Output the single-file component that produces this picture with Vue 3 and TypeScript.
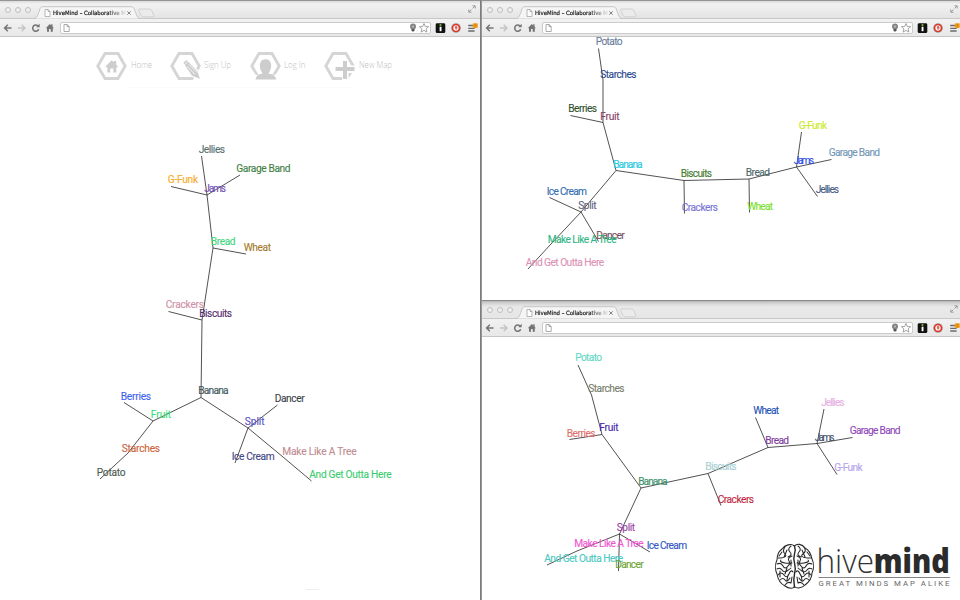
<script setup lang="ts">
type Point = [number, number]
interface Label { text: string; x: number; y: number; w: number; color: string }
interface MapWindow { id: string; viewBox: string; labels: Label[]; edges: Point[][]; nav?: boolean; logo?: boolean }

const L = (text: string, x: number, y: number, w: number, color: string): Label => ({ text, x: x - 0.3, y: y - 0.4, w: w + 0.4, color })
const points = (edge: Point[]) => edge.map(p => p.join(',')).join(' ')

const navItems = ['Home', 'Sign Up', 'Log In', 'New Map']
const navWidths = [21, 27, 21.5, 33]

const main: MapWindow = {
  id: 'main', viewBox: '0 37 480 563', nav: true,
  edges: [
    [[201.5, 156], [207, 195], [213, 248], [202, 320], [201, 397.5], [153, 421], [128, 453], [100, 479]],
    [[171, 186.5], [207, 195], [240, 175]],
    [[213, 248], [246, 254]], [[168.5, 311.5], [202, 320]], [[124, 402.5], [153, 421]],
    [[201, 397.5], [248, 428], [283, 457], [311.5, 481]], [[277.5, 405], [248, 428], [235, 463]],
  ],
  labels: [
    L('Jellies', 199, 153, 26, '#53706c'), L('Garage Band', 236.5, 172.5, 54, '#3f8145'), L('G-Funk', 168, 183.5, 30, '#f5ac27'),
    L('Jams', 204.5, 192, 21.5, '#704fb5'), L('Bread', 211, 245, 24.5, '#3fd77e'), L('Wheat', 244, 251, 27, '#a37b2c'),
    L('Crackers', 166, 308, 38, '#cf91a5'), L('Biscuits', 199.5, 317.3, 32.5, '#552b6d'), L('Banana', 198.5, 394.8, 30, '#40575a'),
    L('Berries', 121, 400, 30, '#3d62f0'), L('Fruit', 151, 418, 20, '#38e077'), L('Dancer', 275, 402, 29.5, '#3d434b'),
    L('Split', 245, 425.5, 19.5, '#5750c4'), L('Starches', 122, 452.5, 38, '#cc6339'), L('Potato', 97, 476.5, 28.5, '#4c5b50'),
    L('Ice Cream', 232, 460, 42.5, '#424785'), L('Make Like A Tree', 282.5, 455.2, 74, '#c18c91'), L('And Get Outta Here', 309.5, 478, 82, '#3bcd71'),
  ],
}

const sideWindows: MapWindow[] = [
  {
    id: 'top', viewBox: '482 37 478 263',
    edges: [
      [[598.5, 48.5], [603, 80], [603, 122.5], [616, 170.5], [684, 180.5], [749, 179], [796.5, 167], [801.5, 132]],
      [[570.5, 115.5], [603, 122.5]], [[831.5, 159.5], [796.5, 167], [817.5, 196.5]],
      [[684, 180.5], [684.5, 213.5]], [[749, 179], [749.5, 212.5]],
      [[616, 170.5], [581, 212], [551, 244], [528, 269]], [[549.5, 197.5], [581, 212], [598.5, 241.5]],
    ],
    labels: [
      L('Potato', 596, 45.8, 26.5, '#69809c'), L('Starches', 600.5, 78, 36, '#2c498d'), L('Berries', 568.5, 112.7, 28.5, '#31502f'),
      L('Fruit', 600.5, 120, 19, '#863d67'), L('Banana', 613.5, 168, 29, '#24c9df'), L('Biscuits', 681, 177.7, 31, '#437a2d'),
      L('Bread', 746, 176.7, 24, '#4c6869'), L('Jams', 794, 164.7, 20, '#2e4ce7'), L('G-Funk', 799, 129.2, 28, '#cbea29'),
      L('Garage Band', 829, 156.5, 51, '#7297b7'), L('Jellies', 816, 193.5, 23, '#435b84'), L('Crackers', 682, 211.5, 36, '#7774d5'),
      L('Wheat', 747.5, 210.2, 25.5, '#77df29'), L('Ice Cream', 547, 195.3, 39.8, '#326eb0'), L('Split', 578.5, 209.8, 18, '#62617d'),
      L('Dancer', 596.5, 239.3, 28, '#744d5a'), L('Make Like A Tree', 548, 243, 68.5, '#2fb583'), L('And Get Outta Here', 526, 266.8, 78, '#dc91b5'),
    ],
  },
  {
    id: 'bottom', viewBox: '482 337 478 263', logo: true,
    edges: [
      [[578, 365], [591.5, 395], [602, 434.5], [641, 488], [708, 473.5], [768, 447.5], [817, 443.5], [824, 409]],
      [[569.5, 439.5], [602, 434.5]], [[708, 473.5], [721, 505.5]], [[755.5, 417.5], [768, 447.5]],
      [[852.5, 437.5], [817, 443.5], [837, 474.5]],
      [[641, 488], [619.5, 534], [577, 551], [547, 565]], [[650, 552], [619.5, 534], [618.5, 571]],
    ],
    labels: [
      L('Potato', 575.5, 361.8, 26.5, '#63d8c4'), L('Starches', 588.5, 392, 36, '#777d69'), L('Fruit', 599.5, 431.3, 19, '#4425ad'),
      L('Berries', 567, 437, 28.5, '#e2706a'), L('Banana', 638.5, 485.7, 29, '#3b9169'), L('Biscuits', 705.5, 470.5, 31, '#a6cfd2'),
      L('Crackers', 718, 503, 36, '#c12740'), L('Bread', 765.5, 444.7, 23.5, '#7d3d9d'), L('Wheat', 753.5, 414.5, 25.5, '#2452b8'),
      L('Jams', 815, 441.5, 19.5, '#45526c'), L('Jellies', 821.5, 406, 23, '#e7afe3'), L('Garage Band', 850, 434.5, 50.5, '#8f48ba'),
      L('G-Funk', 834.5, 471.5, 28, '#b5a4ed'), L('Split', 617, 531.3, 18, '#9942a4'), L('Make Like A Tree', 574.5, 547.7, 69, '#f154cf'),
      L('Ice Cream', 647, 549.2, 40, '#3158c4'), L('And Get Outta Here', 544.5, 562.7, 78.5, '#4bc9c2'), L('Dancer', 615.5, 568.7, 28, '#6da432'),
    ],
  },
]
const columns = [{ id: 'left', windows: [main] }, { id: 'right', windows: sideWindows }]
</script>

<template>
  <main class="desktop">
    <div v-for="col in columns" :key="col.id" class="column" :class="col.id">
      <section v-for="win in col.windows" :key="win.id" class="window">
        <header class="chrome">
          <div class="tabstrip">
            <div class="lights"><i></i><i></i><i></i></div>
            <div class="tab">
              <svg class="tabshape" viewBox="0 0 122 13">
                <path d="M1 12.500C4 12 5 9 6.300 5C7.200 2 7.500 .7 10 .7H98C100.500 .7 101 2 102 5C103.500 9 104 12 107 12.500" fill="#f5f5f5" stroke="#bcbcbc" stroke-width=".8" />
                <path d="M106.500 3H116.500Q118 3 118.700 4.500L120.800 9.300Q121.200 10.800 119.500 10.800H110.500Q108.800 10.800 108.200 9.500L105.800 4.600Q105.300 3 106.500 3Z" fill="#ebebeb" stroke="#c6c6c6" stroke-width=".7" />
              </svg>
              <div class="tabcontent">
                <svg class="page" viewBox="0 0 7 8"><path d="M1 .5H4L6 2.500V7.500H1ZM4 .5V2.500H6" fill="#fff" stroke="#999" stroke-width=".7" /></svg>
                <svg class="title" viewBox="0 0 73 10"><text x="0" y="7.200" textLength="73" lengthAdjust="spacingAndGlyphs">HiveMind – Collaborative M</text></svg>
                <svg class="close" viewBox="0 0 6 6"><path d="M1.300 1.300L4.700 4.700M4.700 1.300L1.300 4.700" stroke="#777" stroke-width=".9" /></svg>
              </div>
            </div>
            <svg class="expand" viewBox="0 0 8 8"><path d="M4.500 .8H7.200V3.500M7 1L4.600 3.400M3.500 7.200H.8V4.500M1 7L3.400 4.600" fill="none" stroke="#9b9b9b" stroke-width="1" /></svg>
          </div>
          <div class="toolbar">
            <svg class="navigation" viewBox="0 0 60 17">
              <g fill="none" stroke-width="1.500">
                <path d="M11.500 9H4.800M7.800 5.800L4.600 9L7.800 12.200" stroke="#747474" />
                <path d="M18 9H24.700M21.700 5.800L24.900 9L21.700 12.200" stroke="#c4c4c4" />
                <path d="M38.300 7.300A3.100 3.100 0 1 0 38.700 10.200" stroke="#747474" />
              </g>
              <path d="M39.700 4.800V8.300H36.200Z" fill="#747474" />
              <path d="M45.800 9.200L49.800 5L51.200 6.400V5.200H52.600V7.700L53.900 9.200H52.800V12.800H50.700V10H49V12.800H47V9.200Z" fill="#747474" />
            </svg>
            <div class="address">
              <svg class="file" viewBox="0 0 7 8"><path d="M1 .5H4L6.200 2.500V7.500H1ZM4 .5V2.500H6.200" fill="#fff" stroke="#888" stroke-width=".7" /></svg>
              <svg class="marks" viewBox="0 0 22 12">
                <circle cx="5" cy="4.500" r="3" fill="#858585" /><circle cx="5" cy="4.500" r="1.100" fill="#bbb" /><path d="M3.500 7H6.500V8.600L5.700 9.600H4.300L3.500 8.600Z" fill="#555" />
                <path d="M16 1.500L17.300 4.500L20.600 4.700L18.100 6.900L18.900 10.100L16 8.400L13.100 10.100L13.900 6.900L11.400 4.700L14.700 4.500Z" fill="#fff" stroke="#888" stroke-width=".75" />
              </svg>
            </div>
            <svg class="extensions" viewBox="0 0 49 17">
              <rect x="4.700" y="4.300" width="9.600" height="9.800" rx="1.400" fill="#111" /><rect x="8.600" y="7.700" width="1.900" height="4.500" fill="#fff" /><circle cx="9.500" cy="6" r="1.100" fill="#7fbc25" />
              <circle cx="25" cy="9" r="4.800" fill="#aaa" /><circle cx="25" cy="9" r="3.500" fill="#fff" stroke="#dc392d" stroke-width="1.700" /><path d="M23.700 8L24.300 7L25.800 6.800L26.500 8.400L26 10.600H24.500Z" fill="#e46a60" />
              <path d="M37.200 6.500H44M37.200 9.300H43.600M37.200 12H43.600" stroke="#6b6b6b" stroke-width="1.300" /><rect x="41.800" y="4.200" width="5" height="4.700" rx=".8" fill="#f49b16" /><path d="M44.300 5V7.300M44.300 7.700V8.300" stroke="#c66d0b" stroke-width=".8" />
            </svg>
          </div>
        </header>
        <div class="content">
          <nav v-if="win.nav" class="sitenav">
            <a v-for="(item, i) in navItems" :key="item">
              <svg class="hex" viewBox="0 0 32 30">
                <path d="M9 2.500H22L29.200 15L22 27.500H9L1.800 15Z" fill="none" stroke="#d5d5d5" stroke-width="2.900" />
                <path v-if="i === 0" d="M9.500 15.600L15.700 9.200L17.800 11.300V10H20.200V13.700L22 15.600L20.800 16.500L20.300 16V21.500H17.400V17.500H14.200V21.500H11.400V16L10.700 16.700Z" fill="#cdcdcd" />
                <g v-else-if="i === 1"><path d="M12.500 11.800L16.600 8L28 20L31 29L21.500 25Z" fill="#cdcdcd" stroke="#fff" stroke-width="1.300" /><path d="M14 14.200L18.700 9.800M17 15.200L25 23.500M19 13.300L27 21.500" stroke="#fff" stroke-width=".8" /></g>
                <g v-else-if="i === 2"><path d="M2.500 20L6 24H25L28.500 20V30H2.500Z" fill="#fff" /><path d="M5.500 28.500Q6 23.700 12.500 22.500C10.200 19 9.400 16 10 12.700Q11 8.300 15.500 8.300Q20 8.300 21 12.700C21.600 16 20.800 19 18.500 22.500Q25.500 23.700 26.300 28.500Z" fill="#cdcdcd" /></g>
                <g v-else><path d="M18 8.500H24.300V14.500H31V29H18V22H10.500V14.500H18Z" fill="#fff" /><path d="M19 10H23V16H30.500V20H23V28H19V20H11.500V16H19Z" fill="#cdcdcd" /><path d="M24.500 22H28L24.500 27.500Z" fill="#d3d3d3" /></g>
              </svg>
              <svg class="navtext" viewBox="0 0 36 16"><text x="0" y="10.300" :textLength="navWidths[i]" lengthAdjust="spacingAndGlyphs">{{ item }}</text></svg>
            </a>
          </nav>
          <svg class="map" :viewBox="win.viewBox">
            <path v-if="win.nav" d="M130 87.500H350" stroke="#fafafa" />
            <path v-if="win.nav" d="M306 589.500H319" stroke="#eee" />
            <g class="edges"><polyline v-for="(edge, i) in win.edges" :key="i" :points="points(edge)" /></g>
            <g class="labels">
              <text v-for="label in win.labels" :key="label.text" :x="label.x" :y="label.y" :textLength="label.w" :fill="label.color" :stroke="label.color">{{ label.text }}</text>
            </g>
            <g v-if="win.logo" class="logo">
              <g class="brain">
                <path d="M794.500 546C791 543 785 545 782 549C778 552 777 556 777 560C775 564 775 570 777 574C778 580 781 584 785 586C789 589 793 589 794.500 586.500C797 589 802 588 805 585C809 582 812 578 812 573C814 569 814 563 812 559C811 554 809 550 805 548C802 544 797 543 794.500 546Z" />
                <path d="M794.500 546Q796 550 794.500 554Q793 559 794.700 564Q796 569 794.500 574Q793 580 794.500 587" stroke-width="1.400" />
                <path d="M791 546Q787 549 790 552T788 557M785 547Q782 551 785 554T781 558L778 558M792 556Q787 558 789 561T785 563T781 560M777 564Q781 562 783 566T788 566T792 563M777 569Q780 567 782 570T787 571T791 568M778 575Q781 571 784 575T789 574T793 572M780 580Q783 577 785 580T790 578M785 585Q788 581 791 583L792 577M787 568L785 574M782 552L779 556M787 550L784 557M791 560V566M780 571V577M788 575L787 580" />
                <path d="M798 546Q802 549 799 552T801 557M804 547Q807 551 803 554T807 558L811 558M797 556Q802 558 800 561T804 563T808 560M812 564Q808 562 806 566T801 566T797 563M812 569Q809 567 807 570T802 571T798 568M811 575Q808 571 805 575T800 574T796 572M809 580Q806 577 804 580T799 578M804 585Q801 581 798 583L797 577M802 568L804 574M807 552L810 556M802 550L805 557M798 560V566M809 571V577M801 575L802 580" />
              </g>
              <text class="hive" x="816.500" y="572.800" textLength="57.500" lengthAdjust="spacingAndGlyphs">hive</text>
              <text class="mind" x="873.800" y="572.800" textLength="76" lengthAdjust="spacingAndGlyphs">mind</text>
              <path d="M818.500 577.500H950" stroke="#777" stroke-width=".9" />
              <text class="tagline" x="818.500" y="585.800" textLength="131">GREAT MINDS MAP ALIKE</text>
            </g>
          </svg>
        </div>
      </section>
    </div>
  </main>
</template>

<style>
body { margin: 0; background: #fff; }
</style>

<style scoped>
.desktop { width: 960px; height: 600px; display: grid; grid-template-columns: 480px 478px; column-gap: 2px; overflow: hidden; background: linear-gradient(90deg, #fff 480px, #707070 480px, #a4a4a4 482px, #fff 482px); }
.column { display: flex; flex-direction: column; min-width: 0; }
.window { flex: 1 1 0; min-height: 0; display: flex; flex-direction: column; overflow: hidden; background: #fff; }
.chrome { flex: none; height: 37px; box-sizing: border-box; border-top: 1px solid #929699; border-bottom: 1px solid #c5c5c5; background: linear-gradient(#dadada, #f2f2f2 3px, #e4e4e4 17px, #f2f2f2 18px, #e8e8e8); }
.right .window + .window .chrome { border-top-color: #888; background: linear-gradient(#b9b9b9, #d9d9d9 3px, #e9e9e9 6px, #e6e6e6 17px, #f1f1f1 18px, #e8e8e8); }
svg { display: block; flex: none; overflow: visible; }
.tabstrip { height: 18px; display: flex; align-items: flex-start; box-sizing: border-box; border-bottom: 1px solid #c8c8c8; }
.lights { display: flex; gap: 4px; padding: 6px 0 0 5px; width: 32px; box-sizing: border-box; }
.lights i { box-sizing: border-box; width: 6px; height: 6px; border: 1px solid #bebebe; border-radius: 50%; background: #eee; }
.tab { display: grid; width: 122px; height: 13px; margin: 5px 0 0 1px; }
.tabshape { grid-area: 1 / 1; width: 122px; height: 13px; }
.tabcontent { grid-area: 1 / 1; display: flex; align-items: center; padding-left: 11px; }
.page { width: 7px; height: 8px; }
.title { width: 73px; height: 10px; margin-left: 2px; -webkit-mask-image: linear-gradient(90deg, #000 54px, transparent 74px); mask-image: linear-gradient(90deg, #000 54px, transparent 74px); }
.title text { font: 400 5.800px "DejaVu Sans", sans-serif; fill: #111; stroke: #222; stroke-width: .2; }
.close { width: 6px; height: 6px; }
.expand { width: 8px; height: 8px; margin: 4px 4px 0 auto; }
.toolbar { height: 17px; display: flex; align-items: flex-start; }
.navigation { width: 60px; height: 17px; }
.address { width: 371px; height: 12px; margin-top: 3px; box-sizing: border-box; border: 1px solid #cbcbcb; border-radius: 2px; background: #fff; display: flex; align-items: center; justify-content: space-between; padding-left: 2px; }
.file { width: 7px; height: 8px; }
.marks { width: 22px; height: 12px; }
.extensions { width: 49px; height: 17px; }
.left .toolbar, .left .tabstrip, .right .tabstrip, .right .toolbar { width: 480px; }
.content { flex: 1; min-height: 0; display: grid; }
.sitenav { grid-area: 1 / 1; align-self: start; display: grid; grid-template-columns: 73.500px 80px 74.500px 70px; padding: 14px 0 0 96px; width: 298px; }
.sitenav a { display: flex; align-items: center; gap: 2.500px; }
.hex { width: 32px; height: 30px; }
.navtext { width: 36px; height: 16px; }
.navtext text { font: 300 9.500px "Open Sans", sans-serif; fill: #bdbdbd; }
.map { grid-area: 1 / 1; width: 100%; height: 100%; }
.edges { fill: none; stroke: #333; stroke-width: .85; }
.labels text { font: 400 10.200px Roboto, "Open Sans", sans-serif; stroke-width: .12; }
.brain { fill: none; stroke: #272727; stroke-width: 1.050; stroke-linecap: round; stroke-linejoin: round; }
.hive { font: 300 33.500px "Open Sans", sans-serif; fill: #333; }
.mind { font: 800 33px "Open Sans", sans-serif; fill: #2b2b2b; }
.tagline { font: 400 7.800px Roboto, sans-serif; fill: #666; }
</style>
